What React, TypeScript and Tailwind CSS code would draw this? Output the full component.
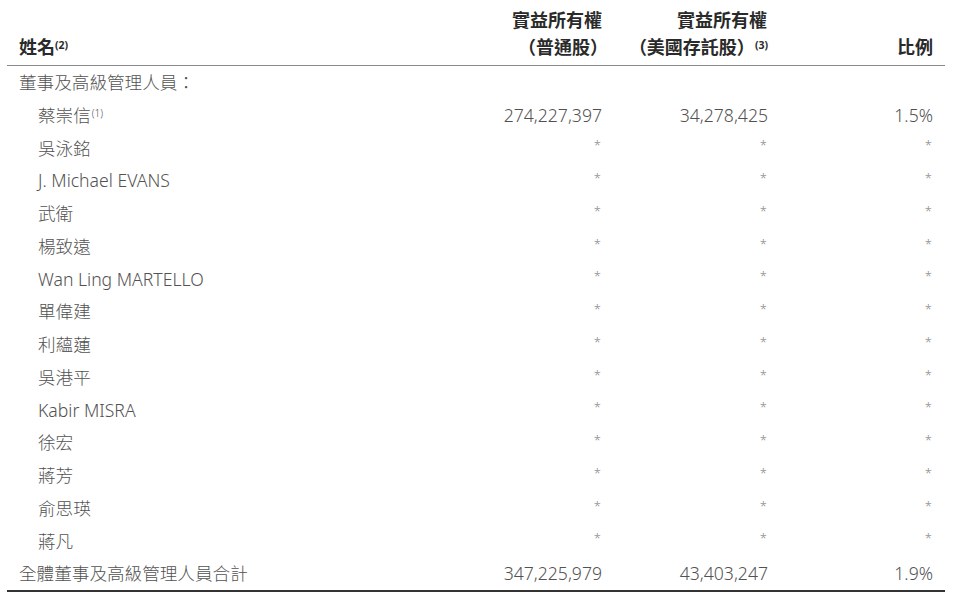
import React from 'react'

type Row = { name: string; note?: string; a: string; b: string; c: string }

const rows: Row[] = [
  { name: '蔡崇信', note: '(1)', a: '274,227,397', b: '34,278,425', c: '1.5%' },
  { name: '吳泳銘', a: '*', b: '*', c: '*' },
  { name: 'J. Michael EVANS', a: '*', b: '*', c: '*' },
  { name: '武衛', a: '*', b: '*', c: '*' },
  { name: '楊致遠', a: '*', b: '*', c: '*' },
  { name: 'Wan Ling MARTELLO', a: '*', b: '*', c: '*' },
  { name: '單偉建', a: '*', b: '*', c: '*' },
  { name: '利蘊蓮', a: '*', b: '*', c: '*' },
  { name: '吳港平', a: '*', b: '*', c: '*' },
  { name: 'Kabir MISRA', a: '*', b: '*', c: '*' },
  { name: '徐宏', a: '*', b: '*', c: '*' },
  { name: '蔣芳', a: '*', b: '*', c: '*' },
  { name: '俞思瑛', a: '*', b: '*', c: '*' },
  { name: '蔣凡', a: '*', b: '*', c: '*' },
]

const grid = 'grid grid-cols-[383px_200px_166px_165px] px-[12px]'

function Cell({ v }: { v: string }) {
  if (v === '*') {
    return <div className="text-right text-[13px] text-[#888] leading-none self-center -translate-y-[2px] pr-[1px]">*</div>
  }
  return <div className="text-right">{v}</div>
}

export default function App() {
  return (
    <div
      className="w-[960px] h-[605px] bg-white px-[7px] pr-[15px] text-[17.6px] text-[#525252] font-light"
      style={{ fontFamily: '"Noto Sans", "Noto Sans CJK TC", sans-serif' }}
    >
      <div className={`${grid} pt-[7px] pb-[4px] border-b-[1.5px] border-[#8a8a8a] text-[18px] font-bold text-[#2a2a2a] leading-[27px] items-end`}>
        <div>
          姓名<sup className="text-[10.5px] font-bold">(2)</sup>
        </div>
        <div className="text-right">
          <div>實益所有權</div>
          <div className="-mr-[6px]">（普通股）</div>
        </div>
        <div className="text-right">
          <div className="pr-[1px]">實益所有權</div>
          <div>
            （美國存託股）<sup className="text-[10.5px] font-bold">(3)</sup>
          </div>
        </div>
        <div className="text-right">比例</div>
      </div>

      <div className="border-b-2 border-[#333]">
        <div className={`${grid} h-[32.75px] items-center`}>
          <div>董事及高級管理人員：</div>
        </div>
        {rows.map((r) => (
          <div key={r.name} className={`${grid} h-[32.75px] items-center`}>
            <div className="pl-[19px]">
              {r.name}
              {r.note && <sup className="text-[10px] ml-[1px]">{r.note}</sup>}
            </div>
            <Cell v={r.a} />
            <Cell v={r.b} />
            <Cell v={r.c} />
          </div>
        ))}
        <div className={`${grid} h-[32.75px] items-center`}>
          <div>全體董事及高級管理人員合計</div>
          <Cell v="347,225,979" />
          <Cell v="43,403,247" />
          <Cell v="1.9%" />
        </div>
      </div>
    </div>
  )
}
